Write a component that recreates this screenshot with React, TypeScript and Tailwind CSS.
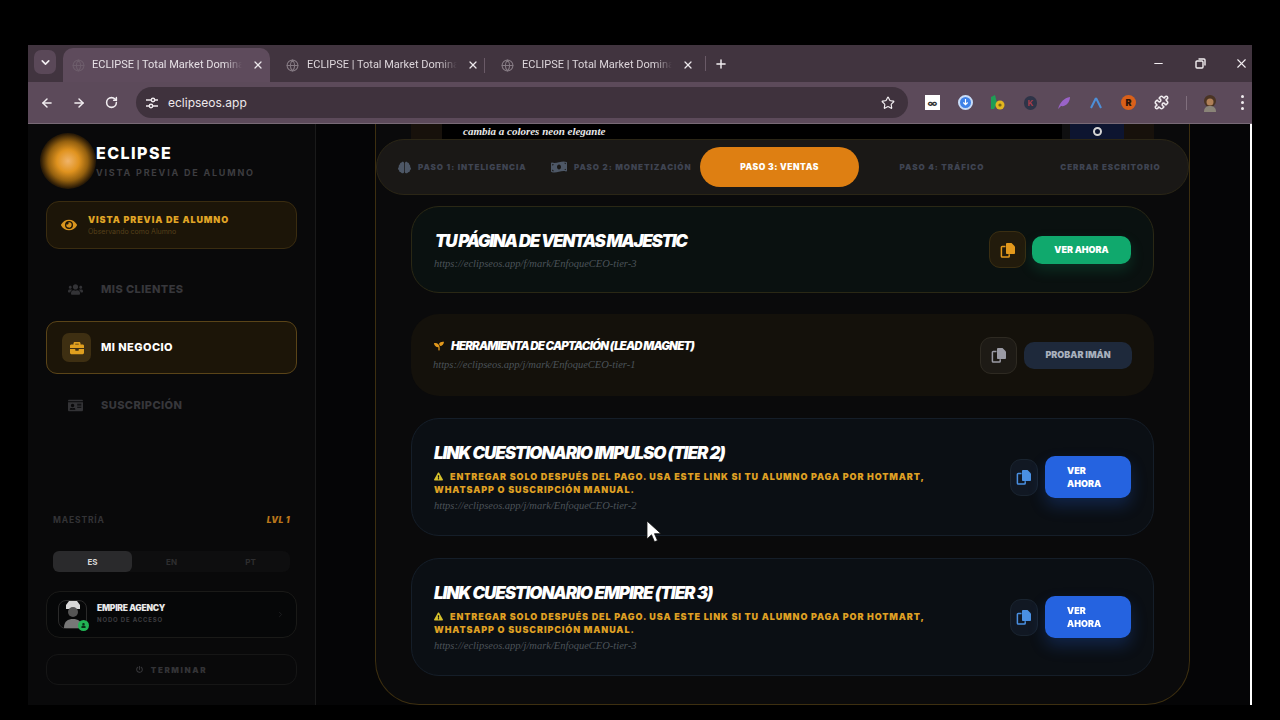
import { ArrowLeft, ArrowRight, ChevronDown, ChevronRight, Globe, Minus, Plus, Puzzle, RotateCw, Star, X } from 'lucide-react';
import { FaBrain, FaBriefcase, FaExclamationTriangle, FaEye, FaIdCard, FaMoneyBillWave, FaPowerOff, FaSeedling, FaUser, FaUsers } from 'react-icons/fa';

const urlClass = "font-[family-name:'Liberation_Serif',serif] italic text-[10.5px] leading-[12px] text-[#4b5359]";
const titleClass = 'font-black italic text-[17px] leading-[22px] text-white';
const warnClass = 'font-black text-[9px] leading-[13px] tracking-[0.1em] text-[#dfa024]';
const stepText = 'text-[8px] font-black tracking-[0.12em] whitespace-nowrap text-[#3f4452]';

function Tab({ active }: { active?: boolean }) {
  return (
    <div className={active ? 'flex items-center w-[207px] h-[34px] mt-[3px] rounded-t-[10px] bg-[#5e4b5c] pl-[9px] pr-[6px]' : 'flex items-center w-[215px] h-[34px] mt-[3px] pl-[16px] pr-[6px]'}>
      <Globe size={13} className={active ? 'text-[#6d5d6b] shrink-0' : 'text-[#857a83] shrink-0'} />
      <span className={active ? 'ml-[7px] w-[150px] whitespace-nowrap font-[family-name:Roboto,sans-serif] text-[11px] text-[#e6e0e5] [mask-image:linear-gradient(to_right,black_88%,transparent)]' : 'ml-[8px] w-[150px] whitespace-nowrap font-[family-name:Roboto,sans-serif] text-[11px] text-[#ddd6db] [mask-image:linear-gradient(to_right,black_88%,transparent)]'}>
        ECLIPSE | Total Market Dominar
      </span>
      <X size={12} strokeWidth={2.5} className="ml-auto text-[#ece7eb]" />
    </div>
  );
}

function Extensions() {
  return (
    <div className="flex items-center ml-[17px]">
      <div className="w-[15px] h-[15px] bg-white flex items-center justify-center text-[10px] leading-none font-bold text-[#333]">∞</div>
      <div className="ml-[18px] w-[15px] h-[15px] rounded-full bg-[#3f82e8] border-2 border-[#c8dcf8] flex items-center justify-center">
        <svg width="7" height="7" viewBox="0 0 8 8"><path d="M4 0v6M1.5 4 4 6.5 6.5 4" stroke="#fff" fill="none" strokeWidth="1.3" /></svg>
      </div>
      <svg className="ml-[17px]" width="15" height="17" viewBox="0 0 15 17">
        <path d="M1 3 5 1l2 8-3 6H1z" fill="#1f9d55" />
        <circle cx="10" cy="11" r="4.5" fill="#e3b71f" />
        <circle cx="10" cy="11" r="1.6" fill="#7a6410" />
      </svg>
      <div className="ml-[19px] w-[13px] h-[14px] rounded-full bg-[#2e3448] flex items-center justify-center text-[8px] font-bold text-[#a83d4a]">K</div>
      <svg className="ml-[20px]" width="14" height="14" viewBox="0 0 14 14"><path d="M1 13C3 6 7 2 13 1c0 5-4 10-9 9z" fill="#9a63c8" /></svg>
      <svg className="ml-[19px]" width="12" height="12" viewBox="0 0 12 12"><path d="M6 1 1 11M6 1l5 10" stroke="#4d8fd8" fill="none" strokeWidth="2" /></svg>
      <div className="ml-[19px] w-[15px] h-[15px] rounded-full bg-[#d9601a] flex items-center justify-center text-[9px] font-black text-[#2a1408]">R</div>
      <Puzzle size={15} strokeWidth={2.5} className="ml-[18px] text-[#f0ecef]" />
      <div className="ml-[17px] w-px h-[14px] bg-[#806f7d]" />
      <svg className="ml-[15px]" width="16" height="18" viewBox="0 0 16 18">
        <circle cx="8" cy="7" r="6" fill="#4a3424" />
        <circle cx="8" cy="8" r="3.5" fill="#b08058" />
        <path d="M2 18c0-5 3-6 6-6s6 1 6 6z" fill="#8a8478" />
      </svg>
      <div className="ml-[23px] flex flex-col gap-[3px]">
        <div className="w-[3px] h-[3px] rounded-full bg-[#f0ecef]" />
        <div className="w-[3px] h-[3px] rounded-full bg-[#f0ecef]" />
        <div className="w-[3px] h-[3px] rounded-full bg-[#f0ecef]" />
      </div>
    </div>
  );
}

function Browser() {
  return (
    <>
      <div className="h-[37px] bg-[#41343f] flex items-start shrink-0 text-[#f2eef1]">
        <div className="ml-[6px] mt-[5px] w-[22px] h-[24px] rounded-[7px] bg-[#5a4858] flex items-center justify-center">
          <ChevronDown size={13} strokeWidth={3} />
        </div>
        <div className="ml-[7px] flex">
          <Tab active />
          <Tab />
          <div className="w-px h-[15px] bg-[#6a5a67] self-center mt-[3px] -ml-px" />
          <Tab />
        </div>
        <div className="w-px h-[15px] bg-[#6a5a67] mt-[11px] ml-[5px]" />
        <Plus size={14} strokeWidth={2.5} className="ml-[8px] mt-[12px]" />
        <Minus size={13} strokeWidth={2} className="ml-[424px] mt-[12px]" />
        <svg className="ml-[30px] mt-[13px]" width="11" height="11" viewBox="0 0 11 11" fill="none" stroke="#f2eef1" strokeWidth="1.4"><rect x="1" y="3" width="7" height="7" rx="1" /><path d="M3.5 1H9a1 1 0 0 1 1 1v5.5" /></svg>
        <X size={15} strokeWidth={1.8} className="ml-[28px] mt-[11px]" />
      </div>
      <div className="h-[42px] bg-[#5c4a5a] border-b border-[#786a76] flex items-center shrink-0 text-[#f2eef1]">
        <ArrowLeft size={14} strokeWidth={2.5} className="ml-[12px]" />
        <ArrowRight size={14} strokeWidth={2.5} className="ml-[18px]" />
        <RotateCw size={13} strokeWidth={2.8} className="ml-[19px]" />
        <div className="ml-[18px] w-[772px] h-[31px] rounded-full bg-[#3f323d] flex items-center pl-[9px] pr-[13px]">
          <svg width="14" height="14" viewBox="0 0 14 14" fill="none" stroke="#efe9ed" strokeWidth="1.4">
            <path d="M1 4h5M10 4h3M1 10h3M8 10h5" /><circle cx="8" cy="4" r="1.7" /><circle cx="6" cy="10" r="1.7" />
          </svg>
          <span className="ml-[9px] text-[12px] text-[#eee9ec]">eclipseos.app</span>
          <Star size={14} strokeWidth={2} className="ml-auto" />
        </div>
        <Extensions />
      </div>
    </>
  );
}

function Sidebar() {
  return (
    <aside className="w-[288px] shrink-0 bg-[#09090a] border-r border-[#1a1a1a] flex flex-col px-[18px] relative">
      <div className="absolute left-[12px] top-[9px] w-[56px] h-[56px] rounded-full bg-[radial-gradient(circle,#f0b46a_0%,#e0931f_28%,#94600f_50%,#2e1d06_68%,transparent_78%)]" />
      <div className="relative pl-[50px] pt-[19px] h-[77px]">
        <div className="text-[16px] leading-[20px] font-extrabold tracking-[0.09em] text-white">ECLIPSE</div>
        <div className="text-[9px] leading-[14px] mt-[3px] font-bold tracking-[0.2em] text-[#3d3d40]">VISTA PREVIA DE ALUMNO</div>
      </div>
      <div className="h-[48px] rounded-[13px] bg-[#1c1508] border border-[#3a2c10] flex items-center pl-[14px]">
        <FaEye size={16} className="text-[#d9951e]" />
        <div className="ml-[11px]">
          <div className="text-[9px] leading-[12px] font-black tracking-[0.1em] text-[#e0a526]">VISTA PREVIA DE ALUMNO</div>
          <div className="text-[7px] leading-[10px] mt-[1px] text-[#55401a]">Observando como Alumno</div>
        </div>
      </div>
      <div className="h-[48px] mt-[16px] flex items-center pl-[22px]">
        <FaUsers size={15} className="text-[#333336]" />
        <span className="ml-[18px] text-[11px] font-extrabold tracking-[0.04em] text-[#37373b]">MIS CLIENTES</span>
      </div>
      <div className="h-[53px] mt-[8px] rounded-[11px] bg-[#1c1508] border border-[#5a4418] flex items-center pl-[15px]">
        <div className="w-[29px] h-[29px] rounded-[7px] bg-[#3e2f12] flex items-center justify-center">
          <FaBriefcase size={14} className="text-[#e0a01f]" />
        </div>
        <span className="ml-[10px] text-[11px] font-extrabold tracking-[0.04em] text-white">MI NEGOCIO</span>
      </div>
      <div className="h-[48px] mt-[7px] flex items-center pl-[22px]">
        <FaIdCard size={15} className="text-[#333336]" />
        <span className="ml-[18px] text-[11px] font-extrabold tracking-[0.04em] text-[#37373b]">SUSCRIPCIÓN</span>
      </div>
      <div className="mt-auto">
        <div className="flex justify-between px-[7px] text-[8.5px] leading-[12px]">
          <span className="font-bold tracking-[0.1em] text-[#333336]">MAESTRÍA</span>
          <span className="font-black italic tracking-[0.05em] text-[#b8751a]">LVL 1</span>
        </div>
        <div className="mt-[25px] mx-[7px] h-[21px] rounded-[7px] bg-[#0e0e0f] flex text-[8px] font-bold">
          <div className="w-[79px] rounded-[6px] bg-[#2a2a2c] text-[#d8d8d8] flex items-center justify-center">ES</div>
          <div className="w-[79px] text-[#2e2e30] flex items-center justify-center">EN</div>
          <div className="w-[79px] text-[#2e2e30] flex items-center justify-center">PT</div>
        </div>
        <div className="mt-[19px] h-[47px] rounded-[14px] bg-[#060708] border border-[#1a1a18] flex items-center pl-[11px] pr-[11px]">
          <div className="relative w-[29px] h-[29px] rounded-[8px] border border-[#2a2a2a] overflow-visible flex items-end justify-center">
            <svg width="24" height="28" viewBox="0 0 24 28">
              <path d="M5 5 8 1h8l3 4v4H5z" fill="#d8d8d8" />
              <circle cx="12" cy="12" r="5" fill="#555" />
              <path d="M3 28c0-7 4-9 9-9s9 2 9 9z" fill="#777" />
            </svg>
            <div className="absolute -right-[3px] -bottom-[3px] w-[11px] h-[11px] rounded-full bg-[#22b455] flex items-center justify-center">
              <FaUser size={5} className="text-[#083018]" />
            </div>
          </div>
          <div className="ml-[10px] -mt-[4px]">
            <div className="text-[8.5px] leading-[12px] font-black tracking-[-0.03em] text-[#e8e8e8]">EMPIRE AGENCY</div>
            <div className="text-[6px] leading-[9px] mt-[1px] font-bold tracking-[0.14em] text-[#3d3d40]">NODO DE ACCESO</div>
          </div>
          <ChevronRight size={9} className="ml-auto text-[#232325]" />
        </div>
        <div className="mt-[16px] mb-[20px] h-[31px] rounded-[12px] border border-[#161616] flex items-center justify-center text-[#333336]">
          <FaPowerOff size={7} />
          <span className="ml-[8px] text-[8px] font-black tracking-[0.2em]">TERMINAR</span>
        </div>
      </div>
    </aside>
  );
}

function NavBar() {
  return (
    <div className="h-[56px] rounded-full bg-[#1a1816] border border-[#2b2616] flex items-center">
      <div className="flex items-center w-[147px] pl-[21px] shrink-0">
        <FaBrain size={13} className="text-[#4d5766] shrink-0" />
        <span className={`ml-[7px] ${stepText}`}>PASO 1: INTELIGENCIA</span>
      </div>
      <div className="flex items-center w-[176px] pl-[27px] shrink-0">
        <FaMoneyBillWave size={16} className="text-[#4d5766] shrink-0" />
        <span className={`ml-[7px] ${stepText}`}>PASO 2: MONETIZACIÓN</span>
      </div>
      <div className="w-[159px] h-[40px] rounded-full bg-[#de7f12] flex items-center justify-center shrink-0 text-[8.5px] font-black tracking-[0.06em] text-white">
        PASO 3: VENTAS
      </div>
      <div className="w-[166px] shrink-0 flex items-center justify-center">
        <span className={stepText}>PASO 4: TRÁFICO</span>
      </div>
      <div className="w-px h-[25px] bg-[#2b2a28]" />
      <div className="w-[163px] pl-[8px] shrink-0 flex items-center justify-center">
        <span className={stepText}>CERRAR ESCRITORIO</span>
      </div>
    </div>
  );
}

function CopyBtn({ tone, narrow }: { tone: 'gold' | 'gray' | 'blue'; narrow?: boolean }) {
  const styles = {
    gold: 'bg-[#221b0c] border-[#3a2e12] text-[#e2981c]',
    gray: 'bg-[#1d1a15] border-[#2e2a22] text-[#9a9aa4]',
    blue: 'bg-[#111823] border-[#1a2430] text-[#4a90e2]',
  };
  return (
    <div className={`${narrow ? 'w-[28px]' : 'w-[37px]'} h-[37px] rounded-[11px] border flex items-center justify-center ${styles[tone]}`}>
      {/* front sheet filled, back sheet outlined */}
      <svg width="16" height="16" viewBox="0 0 16 16">
        <path d="M5.5 4.5H2.2a.8.8 0 0 0-.8.8v8.9c0 .4.4.8.8.8h6.2c.4 0 .8-.4.8-.8v-2" fill="none" stroke="currentColor" strokeWidth="1.5" />
        <path d="M6 1.8c0-.5.4-.8.8-.8h4.7L15 4.5v6.7c0 .5-.4.8-.8.8H6.8a.8.8 0 0 1-.8-.8z" fill="currentColor" />
      </svg>
    </div>
  );
}

function QuizCard({ title, url, margin }: { title: string; url: string; margin: string }) {
  return (
    <div className={`${margin} h-[118px] rounded-[28px] bg-[#0b0f14] border border-[#151e29] flex items-center pl-[22px] pr-[22px]`}>
      <div className="self-start pt-[23px]">
        <div className={`${titleClass} tracking-[-0.065em]`}>{title}</div>
        <p className={`${warnClass} mt-[6px] w-[510px]`}>
          <FaExclamationTriangle size={9} className="inline text-[#d8c22c] mr-[7px] -mt-[2px]" />
          ENTREGAR SOLO DESPUÉS DEL PAGO. USA ESTE LINK SI TU ALUMNO PAGA POR HOTMART, WHATSAPP O SUSCRIPCIÓN MANUAL.
        </p>
        <div className={`${urlClass} mt-[4px]`}>{url}</div>
      </div>
      <div className="ml-auto flex items-center gap-[7px]">
        <CopyBtn tone="blue" narrow />
        <div className="w-[86px] h-[42px] rounded-[10px] bg-[#2563e0] shadow-[0_8px_16px_rgba(37,99,224,0.25)] pl-[22px] flex items-center text-[9px] leading-[13px] font-black text-white">
          VER<br />AHORA
        </div>
      </div>
    </div>
  );
}

function Main() {
  return (
    <main className="flex-1 bg-[#050506] pl-[59px] flex min-w-0">
      <div className="w-[815px] rounded-b-[44px] border-x border-b border-[#3d2f10] bg-[#0a0a0b] flex flex-col">
        <div className="h-[15px] flex shrink-0 overflow-hidden">
          <div className="w-[35px]" />
          <div className="w-[31px] bg-[#17110b]" />
          <div className="w-[620px] bg-black flex items-center pl-[21px] font-[family-name:'Liberation_Serif',serif] italic font-bold text-[11px] text-[#e8e8e8] whitespace-nowrap">
            cambia a colores neon elegante
          </div>
          <div className="w-[8px] bg-[#0f0f10]" />
          <div className="w-[54px] bg-[#0d1530] flex items-center justify-center">
            <div className="w-[9px] h-[9px] rounded-full border-2 border-[#d5d5d5]" />
          </div>
          <div className="w-[30px] bg-[#17110b]" />
        </div>
        <NavBar />
        <div className="px-[35px] flex flex-col">
          <div className="mt-[11px] h-[87px] rounded-[28px] bg-[#0a1110] border border-[#2a2815] flex items-center pl-[23px] pr-[22px]">
            <div className="self-start pt-[23px]">
              <div className={`${titleClass} tracking-[-0.08em]`}>TU PÁGINA DE VENTAS MAJESTIC</div>
              <div className={`${urlClass} mt-[6px] -ml-px`}>https://eclipseos.app/f/mark/EnfoqueCEO-tier-3</div>
            </div>
            <div className="ml-auto flex items-center gap-[6px]">
              <CopyBtn tone="gold" />
              <div className="w-[99px] h-[28px] rounded-[10px] bg-[#10a96d] shadow-[0_6px_14px_rgba(16,169,109,0.2)] flex items-center justify-center text-[9px] font-black text-white">VER AHORA</div>
            </div>
          </div>
          <div className="mt-[21px] h-[82px] rounded-[28px] bg-[#14110b] flex items-center pl-[23px] pr-[22px]">
            <div className="self-start pt-[24px]">
              <div className="flex items-center">
                <FaSeedling size={10} className="text-[#e2981c]" />
                <span className="ml-[7px] font-black italic text-[11.5px] leading-[16px] tracking-[-0.07em] text-white">HERRAMIENTA DE CAPTACIÓN (LEAD MAGNET)</span>
              </div>
              <div className={`${urlClass} mt-[5px] -ml-px`}>https://eclipseos.app/j/mark/EnfoqueCEO-tier-1</div>
            </div>
            <div className="ml-auto flex items-center gap-[7px]">
              <CopyBtn tone="gray" />
              <div className="w-[108px] h-[27px] rounded-[10px] bg-[#1e293b] flex items-center justify-center text-[9px] font-black text-[#a8b0bd]">PROBAR IMÁN</div>
            </div>
          </div>
          <QuizCard margin="mt-[22px]" title="LINK CUESTIONARIO IMPULSO (TIER 2)" url="https://eclipseos.app/j/mark/EnfoqueCEO-tier-2" />
          <QuizCard margin="mt-[22px]" title="LINK CUESTIONARIO EMPIRE (TIER 3)" url="https://eclipseos.app/j/mark/EnfoqueCEO-tier-3" />
        </div>
      </div>
    </main>
  );
}

export default function App() {
  return (
    <div className="relative w-[1280px] h-[720px] overflow-hidden bg-black pt-[45px] pl-[28px] font-[family-name:Inter,sans-serif]">
      <div className="w-[1224px] h-[660px] flex flex-col blur-[0.5px]">
        <Browser />
        <div className="flex-1 flex min-h-0">
          <Sidebar />
          <Main />
          <div className="w-[2px] bg-white shrink-0" />
        </div>
      </div>
      {/* mouse pointer over the page */}
      <svg className="absolute left-[646px] top-[520px]" width="16" height="23" viewBox="0 0 16 23">
        <path d="M1 1v18l4.5-4.2 3 7 3-1.3-3-6.8H15z" fill="#fff" stroke="#111" strokeWidth="0.8" />
      </svg>
    </div>
  );
}
